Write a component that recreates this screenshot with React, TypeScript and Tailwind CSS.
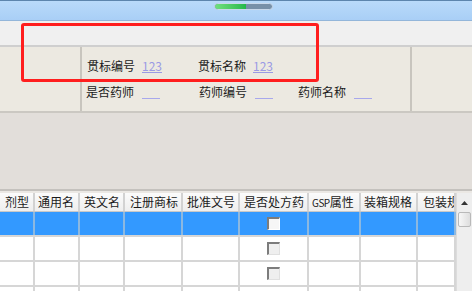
const font = { fontFamily: '"SimSun", "Noto Sans CJK SC", sans-serif' };

const COLUMNS = [
  { label: "剂型", width: 35, pad: 5 },
  { label: "通用名", width: 45, pad: 3 },
  { label: "英文名", width: 45, pad: 4 },
  { label: "注册商标", width: 58, pad: 5 },
  { label: "批准文号", width: 57, pad: 4 },
  { label: "是否处方药", width: 69, pad: 4 },
  { label: "GSP属性", width: 52, pad: 3 },
  { label: "装箱规格", width: 57, pad: 3 },
  { label: "包装规", width: 38, pad: 5 },
];

const ROWS = [true, false, false, false];

function Checkbox({ selected }: { selected: boolean }) {
  return (
    <div
      className={`w-[13px] h-[13px] border-t-2 border-l-2 border-t-[#7c7c7c] border-l-[#7c7c7c] ${
        selected ? "border-r border-b border-r-white border-b-white bg-[#f6f6f6]" : "border-r border-b border-r-[#e0e0e0] border-b-[#e0e0e0] bg-[#efefef]"
      }`}
    />
  );
}

export default function App() {
  return (
    <div className="relative w-[472px] h-[291px] overflow-hidden bg-white text-[12px] text-[#1a1a1a]" style={font}>
      {/* title strip */}
      <div className="h-[21px] border-t border-[#5d85ad] bg-gradient-to-b from-[#b9dafa] to-[#a9cff6] border-b border-b-[#93b6da]">
        <div className="ml-[214px] mt-[2px] w-[59px] h-[7px] rounded-full bg-[#7790a8] border border-[#c8d8ea] overflow-hidden">
          <div className="w-[31px] h-full bg-gradient-to-r from-[#6fe07f] to-[#22b94a] rounded-l-full" />
        </div>
      </div>

      {/* toolbar strip */}
      <div className="h-[26px] bg-[#f0f0f0] border-b-2 border-[#cfcfcf]" />

      {/* info panel */}
      <div className="flex h-[66px] bg-[#ece9e1] border-b-2 border-[#cbc8c2]">
        <div className="w-[82px] border-r-2 border-r-[#c8c5be]" />
        <div className="w-[330px] border-r-2 border-r-[#c8c5be] pl-[5px] pt-[11px]">
          <div className="flex items-center h-[16px]">
            <span className="w-[55px]">贯标编号</span>
            <span className="w-[56px] text-[#9a9ae4] underline">123</span>
            <span className="w-[55px]">贯标名称</span>
            <span className="text-[#9a9ae4] underline">123</span>
          </div>
          <div className="flex items-center h-[16px] mt-[10px]">
            <span className="w-[56px] -ml-[1px]">是否药师</span>
            <span className="w-[57px] flex items-end h-full">
              <span className="block w-[18px] h-[1px] mb-[1px] bg-[#a8a8ec]" />
            </span>
            <span className="w-[56px]">药师编号</span>
            <span className="w-[43px] flex items-end h-full">
              <span className="block w-[18px] h-[1px] mb-[1px] bg-[#a8a8ec]" />
            </span>
            <span className="w-[56px]">药师名称</span>
            <span className="flex items-end h-full">
              <span className="block w-[18px] h-[1px] mb-[1px] bg-[#a8a8ec]" />
            </span>
          </div>
        </div>
        <div className="flex-1" />
      </div>

      {/* gray gap */}
      <div className="h-[78px] bg-[#e2deda] border-b-2 border-[#c4c1bd]" />
      <div className="h-[2px] bg-[#ebe8e4]" />

      {/* grid */}
      <div className="flex">
        <div className="w-[456px]">
          <div className="flex h-[19px] bg-gradient-to-b from-[#fbfbfb] to-[#eeeeee] border-b border-[#c8c8c8]">
            {COLUMNS.map((c) => (
              <div
                key={c.label}
                className="shrink-0 flex items-center border-r-2 border-r-[#d2d2d2] whitespace-nowrap overflow-hidden"
                style={{ width: c.width, paddingLeft: c.pad }}
              >
                {c.label === "GSP属性" ? (
                  <>
                    <span className="text-[10px] tracking-[-0.5px]">GSP</span>属性
                  </>
                ) : (
                  c.label
                )}
              </div>
            ))}
          </div>
          {ROWS.map((selected, i) => (
            <div
              key={i}
              className={`flex h-[25px] border-b-2 border-[#d6d6d6] ${selected ? "bg-[#3399ff]" : "bg-white"}`}
            >
              {COLUMNS.map((c) => (
                <div
                  key={c.label}
                  className={`shrink-0 flex items-center justify-center border-r-2 ${
                    selected ? "border-r-[#8cb8e0]" : "border-r-[#d6d6d6]"
                  }`}
                  style={{ width: c.width }}
                >
                  {c.label === "是否处方药" ? <Checkbox selected={selected} /> : null}
                </div>
              ))}
            </div>
          ))}
        </div>

        {/* scrollbar */}
        <div className="w-[16px] bg-[#eeeeee] border-l border-[#dcdcdc]">
          <div className="h-[19px] flex items-center justify-center">
            <svg width="7" height="4" viewBox="0 0 7 4">
              <path d="M3.5 0 L7 4 L0 4 Z" fill="#333" />
            </svg>
          </div>
          <div className="mx-[1px] h-[15px] rounded-[2px] border border-[#b9b9b9] bg-gradient-to-r from-[#f7f7f7] to-[#dedede]" />
        </div>
      </div>

      {/* annotation */}
      <div className="absolute left-[21px] top-[23px] w-[298px] h-[59px] border-[3px] border-[#ff1e1e] rounded-[3px]" />
    </div>
  );
}
